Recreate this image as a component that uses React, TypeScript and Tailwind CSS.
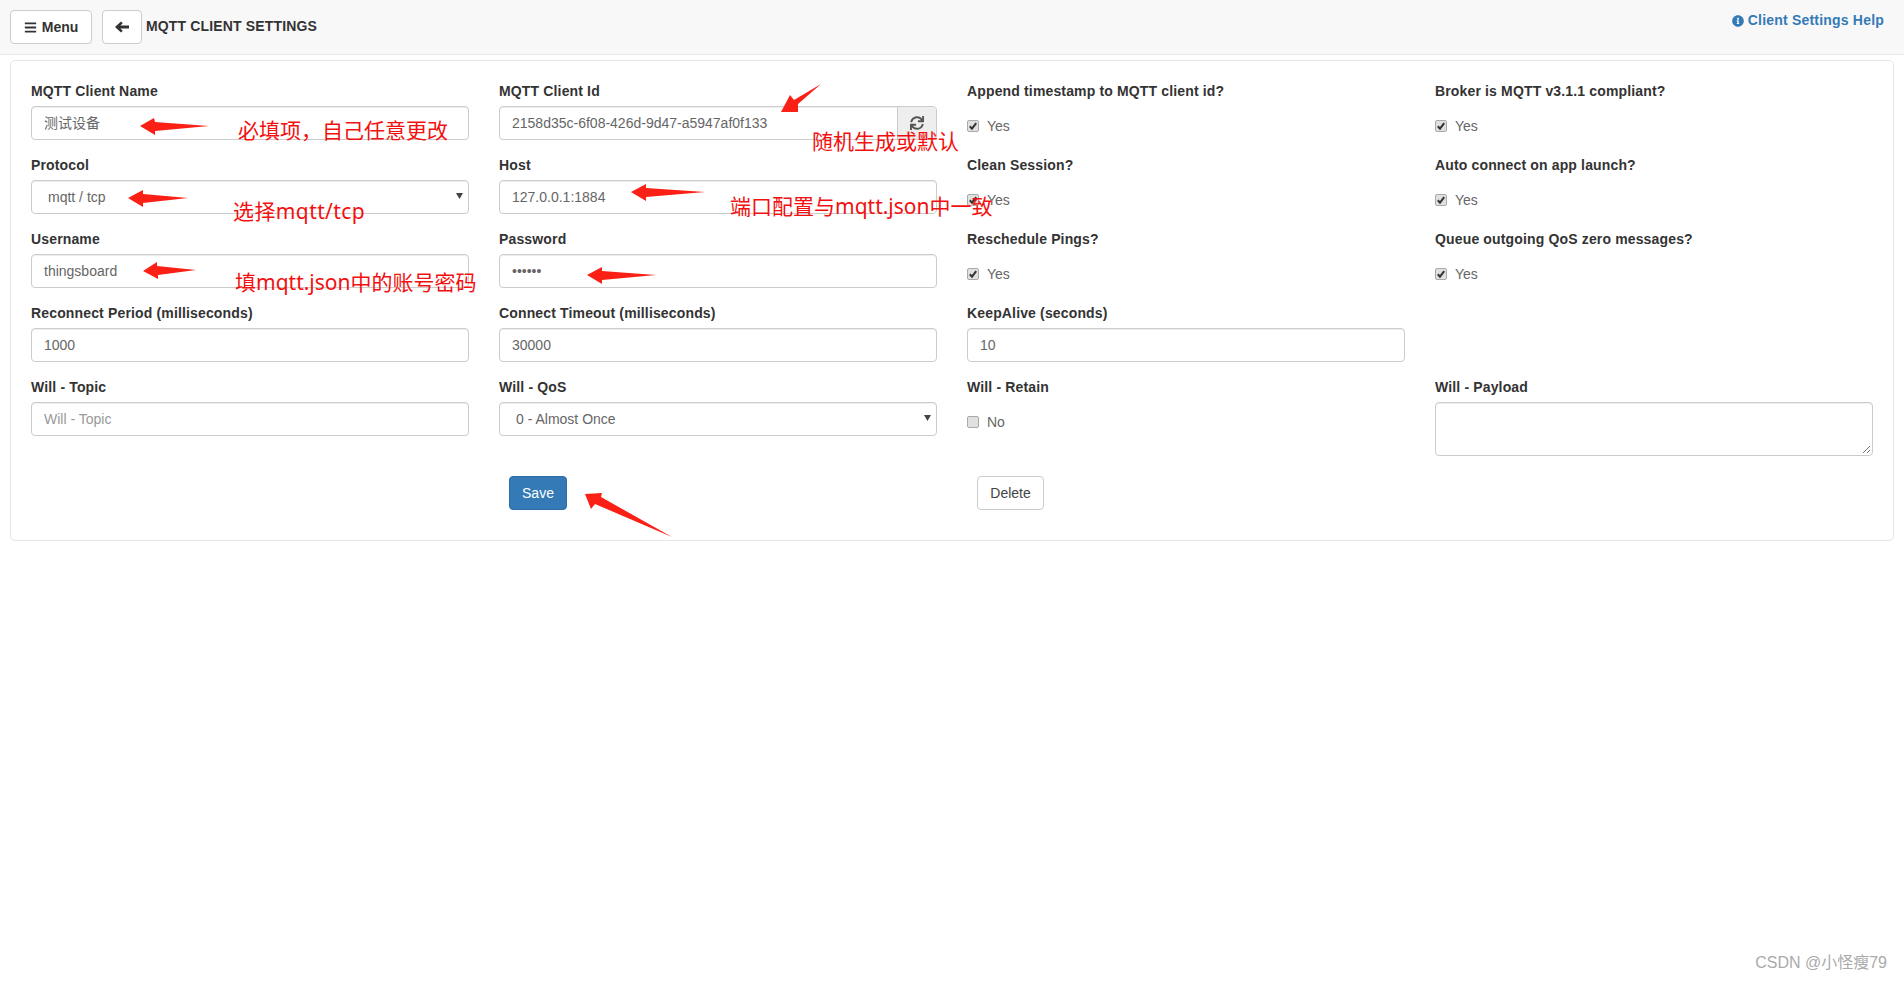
import { FaBars, FaInfoCircle, FaSync } from "react-icons/fa";

const fieldBox =
  "h-[34px] rounded-[4px] border border-[#ccc] bg-white shadow-[inset_0_1px_1px_rgba(0,0,0,0.075)] flex items-center text-[14px] text-[#666]";

function Label({ children }: { children: React.ReactNode }) {
  return <div className="h-[20px] mb-[5px] leading-[20px] text-[14px] font-bold text-[#333] tracking-[0.15px] whitespace-nowrap">{children}</div>;
}

function TextField({ label, value, muted }: { label: string; value: React.ReactNode; muted?: boolean }) {
  return (
    <div className="mb-[15px]">
      <Label>{label}</Label>
      <div className={`${fieldBox} px-[12px] ${muted ? "text-[#999]" : ""}`}>{value}</div>
    </div>
  );
}

function SelectField({ label, value }: { label: string; value: string }) {
  return (
    <div className="mb-[15px]">
      <Label>{label}</Label>
      <div className={`${fieldBox} pl-[16px] pr-[5px] justify-between`}>
        <span>{value}</span>
        <svg width="7" height="6" viewBox="0 0 7 6" className="mb-[2px]">
          <path d="M0 0H7L3.5 6Z" fill="#444" />
        </svg>
      </div>
    </div>
  );
}

function CheckField({ label, text, checked = true }: { label: string; text: string; checked?: boolean }) {
  return (
    <div className="mb-[15px] h-[59px]">
      <Label>{label}</Label>
      <div className="flex items-center gap-[8px] pt-[12px] text-[14px] text-[#666] leading-[16px]">
        <span className="w-[12px] h-[12px] rounded-[2px] border border-[#aaa] bg-[#e0e0e0] flex items-center justify-center">
          {checked && (
            <svg width="10" height="10" viewBox="0 0 10 10">
              <path d="M1.8 5.2L4 7.6L8.2 2.2" fill="none" stroke="#333" strokeWidth="2" />
            </svg>
          )}
        </span>
        <span>{text}</span>
      </div>
    </div>
  );
}

function Note({ x, y, wide, children }: { x: number; y: number; wide?: boolean; children: React.ReactNode }) {
  return (
    <div
      className={`absolute whitespace-nowrap text-[21px] leading-[28px] text-[#f21010] font-['Noto_Sans','Noto_Sans_CJK_SC',sans-serif] ${wide ? "tracking-[0.4px]" : ""}`}
      style={{ left: x, top: y }}
    >
      {children}
    </div>
  );
}

const arrows = [
  "140,126 154,118 155,122 209,126 155,131 155,135",
  "128,198 143,190 143,194 188,198 143,203 143,207",
  "143,271 157,262 157,266 196,270 158,275 158,279",
  "631,192 646,184 646,188 705,192 646,197 646,201",
  "587,275 602,267 602,271 656,275 602,280 602,284",
  "781,112 790,95 794,100 821,84 798,104 798,112",
  "585,494 602,493 601,497 672,537 595,504 591,509",
];

export default function App() {
  return (
    <div className="relative min-h-screen bg-white font-['Liberation_Sans','Noto_Sans_CJK_SC',sans-serif] overflow-hidden">
      <header className="h-[55px] bg-[#f8f8f8] border-b border-[#e7e7e7] flex items-start justify-between pl-[10px] pr-[20px]">
        <div className="flex items-center pt-[10px]">
          <button className="h-[34px] w-[82px] rounded-[4px] border border-[#ccc] bg-white flex items-center justify-center gap-[5px] text-[14px] font-bold text-[#333]">
            <FaBars className="w-[13px] h-[13px]" />
            Menu
          </button>
          <button className="ml-[10px] h-[34px] w-[40px] rounded-[4px] border border-[#ccc] bg-white flex items-center justify-center text-[#333]">
            <svg width="14" height="12" viewBox="0 0 14 12">
              <path d="M0 6L6 0.5L7.8 2.2L5.4 4.4H14V7.6H5.4L7.8 9.8L6 11.5Z" fill="#333" />
            </svg>
          </button>
          <h1 className="ml-[4px] mb-[2px] text-[14px] font-bold text-[#333] tracking-[0.15px] uppercase">MQTT Client Settings</h1>
        </div>
        <a className="mt-[10px] flex items-center gap-[4px] text-[14px] font-bold text-[#337ab7] tracking-[0.2px]">
          <FaInfoCircle className="w-[12px] h-[12px]" />
          Client Settings Help
        </a>
      </header>

      <main className="ml-[10px] mt-[5px] w-[1884px] h-[481px] rounded-[5px] border border-[#e6e6e6] bg-white px-[20px] pt-[20px]">
        <div className="grid grid-cols-4 gap-x-[30px]">
          <TextField label="MQTT Client Name" value="测试设备" />
          <div className="mb-[15px]">
            <Label>MQTT Client Id</Label>
            <div className={`${fieldBox} overflow-hidden`}>
              <span className="flex-1 px-[12px]">2158d35c-6f08-426d-9d47-a5947af0f133</span>
              <span className="w-[39px] h-full bg-[#eee] border-l border-[#ccc] flex items-center justify-center">
                <FaSync className="w-[14px] h-[14px] text-[#555]" />
              </span>
            </div>
          </div>
          <CheckField label="Append timestamp to MQTT client id?" text="Yes" />
          <CheckField label="Broker is MQTT v3.1.1 compliant?" text="Yes" />

          <SelectField label="Protocol" value="mqtt / tcp" />
          <TextField label="Host" value="127.0.0.1:1884" />
          <CheckField label="Clean Session?" text="Yes" />
          <CheckField label="Auto connect on app launch?" text="Yes" />

          <TextField label="Username" value="thingsboard" />
          <TextField label="Password" value="••••••" />
          <CheckField label="Reschedule Pings?" text="Yes" />
          <CheckField label="Queue outgoing QoS zero messages?" text="Yes" />

          <TextField label="Reconnect Period (milliseconds)" value="1000" />
          <TextField label="Connect Timeout (milliseconds)" value="30000" />
          <TextField label="KeepAlive (seconds)" value="10" />
          <div />

          <TextField label="Will - Topic" value="Will - Topic" muted />
          <SelectField label="Will - QoS" value="0 - Almost Once" />
          <CheckField label="Will - Retain" text="No" checked={false} />
          <div className="mb-[15px]">
            <Label>Will - Payload</Label>
            <div className="relative h-[54px] rounded-[4px] border border-[#ccc] bg-white shadow-[inset_0_1px_1px_rgba(0,0,0,0.075)]">
              <svg width="9" height="9" viewBox="0 0 9 9" className="absolute right-[1px] bottom-[1px]">
                <path d="M1 8L8 1M5 8L8 5" stroke="#777" strokeWidth="1" />
              </svg>
            </div>
          </div>

          <div />
          <div className="pl-[10px] mt-[5px]">
            <button className="h-[34px] w-[58px] rounded-[4px] border border-[#2e6da4] bg-[#337ab7] text-[14px] text-white">Save</button>
          </div>
          <div className="pl-[10px] mt-[5px]">
            <button className="h-[34px] w-[67px] rounded-[4px] border border-[#ccc] bg-white text-[14px] text-[#444]">Delete</button>
          </div>
        </div>
      </main>

      <svg className="absolute left-0 top-0 pointer-events-none" width="1904" height="981">
        {arrows.map((p) => (
          <polygon key={p} points={p} fill="#fb2015" />
        ))}
      </svg>
      <Note x={238} y={116}>必填项，自己任意更改</Note>
      <Note x={233} y={197} wide>选择mqtt/tcp</Note>
      <Note x={235} y={268}>填mqtt.json中的账号密码</Note>
      <Note x={812} y={127}>随机生成或默认</Note>
      <Note x={730} y={192}>端口配置与mqtt.json中一致</Note>

      <div className="absolute right-[17px] top-[952px] text-[16px] leading-[22px] text-[#aaa]">CSDN @小怪瘦79</div>
    </div>
  );
}
